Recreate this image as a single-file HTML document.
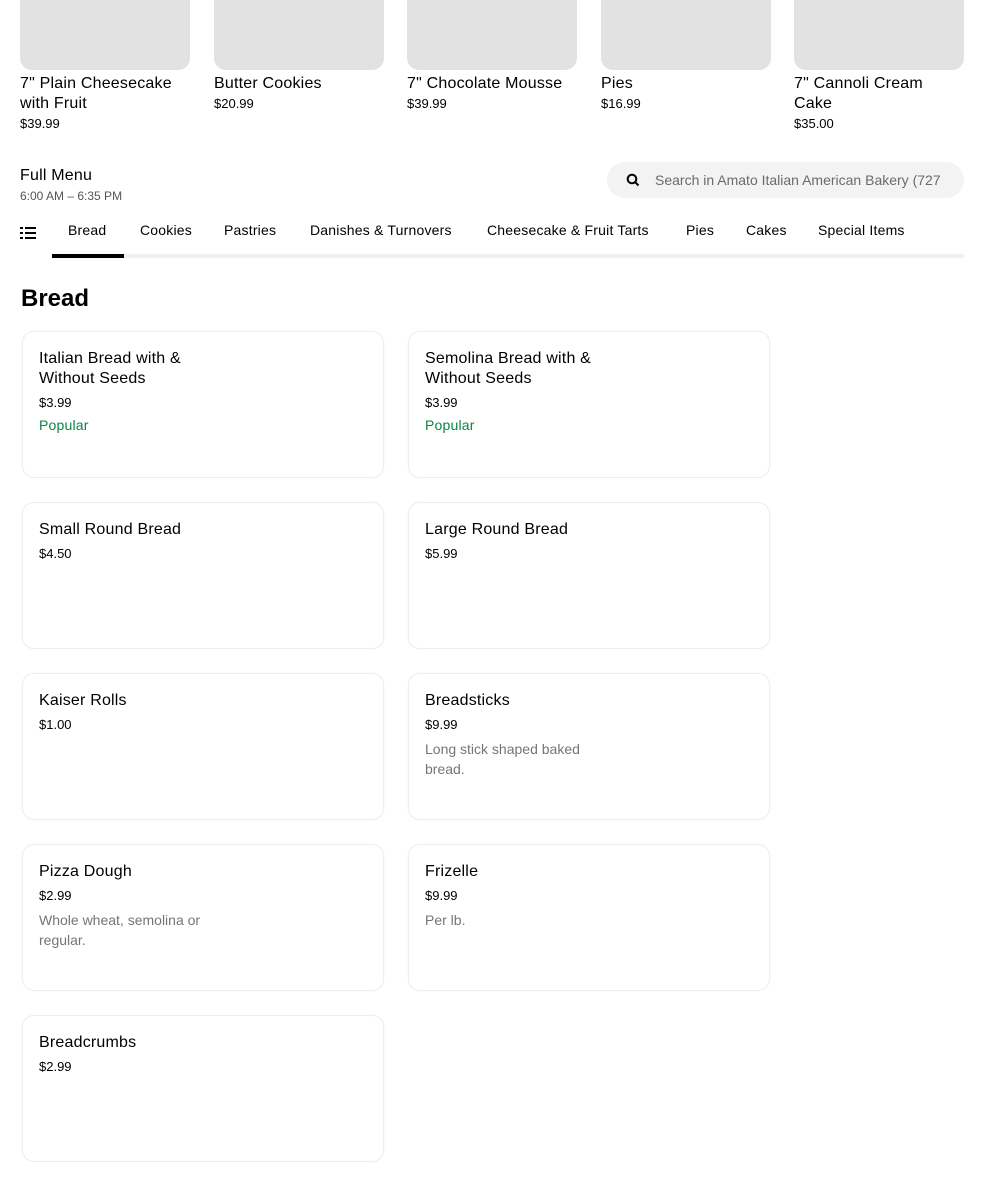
<!DOCTYPE html>
<html><head><style>
*{margin:0;padding:0;box-sizing:border-box}
body{width:984px;height:1179px;overflow:hidden;background:#fff;font-family:"Liberation Sans",sans-serif;color:#000;position:relative}
.a{position:absolute}
.img{position:absolute;top:-20px;width:170px;height:90px;background:#e2e2e2;border-radius:12px}
.t{font-size:16px;line-height:20px;font-weight:500;letter-spacing:.2px}
.p{font-size:13px;line-height:20px;color:#000}
.card{position:absolute;width:362px;height:147px;border:1px solid #eee;border-radius:12px;box-shadow:0 0 2px rgba(0,0,0,.04);padding:17px 16px}
.card .p{margin-top:4px}
.g{color:#0e8345;font-size:14px;line-height:20px;margin-top:2px;letter-spacing:.2px}
.d{color:#757575;font-size:14px;line-height:20px;width:190px;margin-top:4px}
.tab{position:absolute;top:221px;font-size:14px;line-height:18px;letter-spacing:.2px}
</style></head><body>
<div class="img" style="left:20px"></div>
<div class="img" style="left:214px"></div>
<div class="img" style="left:407px"></div>
<div class="img" style="left:601px"></div>
<div class="img" style="left:794px"></div>
<div class="a" style="left:20px;top:74px;width:170px"><div class="t">7" Plain Cheesecake<br>with Fruit</div><div class="p">$39.99</div></div>
<div class="a" style="left:214px;top:74px;width:170px"><div class="t">Butter Cookies</div><div class="p">$20.99</div></div>
<div class="a" style="left:407px;top:74px;width:170px"><div class="t">7" Chocolate Mousse</div><div class="p">$39.99</div></div>
<div class="a" style="left:601px;top:74px;width:170px"><div class="t">Pies</div><div class="p">$16.99</div></div>
<div class="a" style="left:794px;top:74px;width:170px"><div class="t">7" Cannoli Cream<br>Cake</div><div class="p">$35.00</div></div>

<div class="a" style="left:20px;top:166px;font-size:16px;line-height:20px;letter-spacing:.2px">Full Menu</div>
<div class="a" style="left:20px;top:189px;font-size:12px;color:#545454">6:00 AM – 6:35 PM</div>
<div class="a" style="left:607px;top:162px;width:357px;height:36px;border-radius:18px;background:#f3f3f3;overflow:hidden;white-space:nowrap">
<svg class="a" style="left:19px;top:11px" width="14" height="14" viewBox="0 0 14 14"><circle cx="6" cy="6" r="4.3" fill="none" stroke="#000" stroke-width="2"/><path d="M9 9l3.5 3.5" stroke="#000" stroke-width="2"/></svg>
<div class="a" style="left:48px;top:10px;font-size:14px;color:#6b6b6b">Search in Amato Italian American Bakery (727</div></div>

<svg class="a" style="left:20px;top:226px" width="16" height="14" viewBox="0 0 16 14"><g fill="#000"><rect x="0" y="1" width="3" height="2"/><rect x="5" y="1" width="11" height="2"/><rect x="0" y="6" width="3" height="2"/><rect x="5" y="6" width="11" height="2"/><rect x="0" y="11" width="3" height="2"/><rect x="5" y="11" width="11" height="2"/></g></svg>
<div class="tab" style="left:68px">Bread</div>
<div class="tab" style="left:140px">Cookies</div>
<div class="tab" style="left:224px">Pastries</div>
<div class="tab" style="left:310px">Danishes &amp; Turnovers</div>
<div class="tab" style="left:487px">Cheesecake &amp; Fruit Tarts</div>
<div class="tab" style="left:686px">Pies</div>
<div class="tab" style="left:746px">Cakes</div>
<div class="tab" style="left:818px">Special Items</div>
<div class="a" style="left:52px;top:254px;width:912px;height:4px;background:#f1f1f1"></div>
<div class="a" style="left:52px;top:254px;width:72px;height:4px;background:#000"></div>

<div class="a" style="left:21px;top:285px;font-size:24px;font-weight:bold;line-height:28px">Bread</div>

<div class="card" style="left:22px;top:331px"><div class="t">Italian Bread with &amp;<br>Without Seeds</div><div class="p">$3.99</div><div class="g">Popular</div></div>
<div class="card" style="left:408px;top:331px"><div class="t">Semolina Bread with &amp;<br>Without Seeds</div><div class="p">$3.99</div><div class="g">Popular</div></div>
<div class="card" style="left:22px;top:502px"><div class="t">Small Round Bread</div><div class="p">$4.50</div></div>
<div class="card" style="left:408px;top:502px"><div class="t">Large Round Bread</div><div class="p">$5.99</div></div>
<div class="card" style="left:22px;top:673px"><div class="t">Kaiser Rolls</div><div class="p">$1.00</div></div>
<div class="card" style="left:408px;top:673px"><div class="t">Breadsticks</div><div class="p">$9.99</div><div class="d">Long stick shaped baked bread.</div></div>
<div class="card" style="left:22px;top:844px"><div class="t">Pizza Dough</div><div class="p">$2.99</div><div class="d">Whole wheat, semolina or regular.</div></div>
<div class="card" style="left:408px;top:844px"><div class="t">Frizelle</div><div class="p">$9.99</div><div class="d">Per lb.</div></div>
<div class="card" style="left:22px;top:1015px"><div class="t">Breadcrumbs</div><div class="p">$2.99</div></div>
</body></html>
